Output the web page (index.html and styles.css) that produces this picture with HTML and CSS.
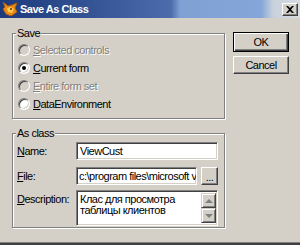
FILE: index.html
```html
<!DOCTYPE html>
<html>
<head>
    <title>Save As Class</title>
    <link rel="stylesheet" href="styles.css">
</head>
<body>
    <div class="window">
        <div class="titlebar">
            <svg class="app-icon" width="16" height="16" viewBox="0 0 16 16">
                <polygon points="1,1 6,5 10,4 15,2 13,7 15,11 9,15 4,13 1,8 3,6" fill="#e88a18" stroke="#b05a08" stroke-width="0.8"/>
                <polygon points="5,7 9,6 12,8 10,12 6,11" fill="#ffc850"/>
                <circle cx="9" cy="8" r="0.9" fill="#402000"/>
            </svg>
            <span class="title">Save As Class</span>
            <span class="close-btn">
                <svg width="8" height="7" viewBox="0 0 8 7">
                    <path d="M0,0 L2,0 L4,2 L6,0 L8,0 L5,3.5 L8,7 L6,7 L4,5 L2,7 L0,7 L3,3.5 Z" fill="#000"/>
                </svg>
            </span>
        </div>
        <div class="content">
            <div class="groups">
                <div class="group group-save">
                    <span class="legend">Save</span>
                    <div class="radio-row disabled"><span class="radio"></span><span><u>S</u>elected controls</span></div>
                    <div class="radio-row"><span class="radio checked"></span><span><u>C</u>urrent form</span></div>
                    <div class="radio-row disabled"><span class="radio"></span><span><u>E</u>ntire form set</span></div>
                    <div class="radio-row"><span class="radio"></span><span><u>D</u>ataEnvironment</span></div>
                </div>
                <div class="group group-class">
                    <span class="legend">As class</span>
                    <div class="field-row">
                        <span class="field-label"><u>N</u>ame:</span>
                        <div class="textbox name-box">ViewCust</div>
                    </div>
                    <div class="field-row file-row">
                        <span class="field-label"><u>F</u>ile:</span>
                        <div class="textbox file-box">c:\program files\microsoft v</div>
                        <div class="btn browse">...</div>
                    </div>
                    <div class="field-row desc-row">
                        <span class="field-label"><u>D</u>escription:</span>
                        <div class="textbox memo">
                            <div class="memo-text">Клас для просмотра<br>таблицы клиентов</div>
                            <div class="scroll">
                                <span class="scroll-btn"><span class="arrow-up"></span></span>
                                <span class="scroll-btn"><span class="arrow-down"></span></span>
                            </div>
                        </div>
                    </div>
                </div>
            </div>
            <div class="buttons">
                <div class="btn default">OK</div>
                <div class="btn cancel">Cancel</div>
            </div>
        </div>
    </div>
</body>
</html>
```
FILE: styles.css
```css
body {
    margin: 0;
    background-color: #d4d0c8;
    font-family: "Liberation Sans", Arial, sans-serif;
    font-size: 11px;
    letter-spacing: -0.5px;
    color: #000;
}
.window {
    width: 300px;
    height: 245px;
    box-sizing: border-box;
    border-bottom: 2px solid #404040;
    box-shadow: inset 0 -1px 0 #808080;
    overflow: hidden;
}
.titlebar {
    height: 18px;
    display: flex;
    align-items: center;
    background: linear-gradient(to right, #1c3a7c 0%, #3c5c9e 40%, #4c6cac 57%, #7ea0d2 60%, #84a6d8 87%, #c8d0dc 91%, #d8dce2 100%);
}
.app-icon {
    margin-left: 2px;
    flex: none;
}
.title {
    margin-left: 2px;
    color: #fff;
    font-weight: bold;
    font-size: 11px;
    letter-spacing: -0.5px;
    flex: 1;
}
.close-btn {
    width: 16px;
    height: 13px;
    margin-right: 2px;
    box-sizing: border-box;
    display: flex;
    align-items: center;
    justify-content: center;
    background-color: #d4d0c8;
    border: 1px solid;
    border-color: #fff #404040 #404040 #fff;
    box-shadow: inset -1px -1px 0 #808080;
}
.content {
    display: flex;
    padding-left: 12px;
}
.groups {
    width: 213px;
    padding-top: 15px;
}
.group {
    position: relative;
    box-sizing: border-box;
    width: 213px;
    border: 1px solid #808080;
    box-shadow: inset 1px 1px 0 #fff, 1px 1px 0 #fff;
}
.legend {
    position: absolute;
    top: -7px;
    left: 3px;
    padding: 0 1px;
    line-height: 13px;
    background-color: #d4d0c8;
}
.group-save {
    padding: 7px 0 5px 5px;
}
.radio-row {
    height: 18px;
    display: flex;
    align-items: center;
    gap: 3px;
}
.radio-row.disabled {
    color: #808080;
    text-shadow: 1px 1px 0 #fff;
}
.radio {
    width: 12px;
    height: 12px;
    box-sizing: border-box;
    border-radius: 50%;
    border: 1px solid;
    border-color: #808080 #fff #fff #808080;
    box-shadow: inset 1px 1px 0 #404040, inset -1px -1px 0 #d4d0c8;
    background-color: #fff;
    display: flex;
    align-items: center;
    justify-content: center;
}
.radio-row.disabled .radio {
    background-color: #d4d0c8;
}
.radio.checked::after {
    content: "";
    width: 4px;
    height: 4px;
    border-radius: 50%;
    background-color: #000;
}
.group-class {
    margin-top: 14px;
    padding: 8px 6px 1px 4px;
}
.field-row {
    display: flex;
    align-items: center;
    height: 18px;
}
.file-row {
    margin-top: 7px;
}
.desc-row {
    margin-top: 5px;
    height: 36px;
    align-items: flex-start;
}
.desc-row .field-label {
    padding-top: 3px;
}
.field-label {
    width: 59px;
    flex: none;
}
.textbox {
    height: 18px;
    box-sizing: border-box;
    border: 1px solid;
    border-color: #808080 #fff #fff #808080;
    box-shadow: inset 1px 1px 0 #404040, inset -1px -1px 0 #d4d0c8;
    background-color: #fff;
    padding: 2px 3px 0 3px;
    white-space: nowrap;
    overflow: hidden;
}
.name-box {
    width: 142px;
}
.file-box {
    width: 122px;
    padding-left: 2px;
}
.memo {
    width: 142px;
    height: 36px;
    display: flex;
    padding: 2px 1px 2px 3px;
}
.memo-text {
    flex: 1;
    line-height: 11px;
    padding-top: 1px;
}
.scroll {
    width: 15px;
    display: flex;
    flex-direction: column;
}
.scroll-btn {
    flex: 1;
    box-sizing: border-box;
    border: 1px solid;
    border-color: #d4d0c8 #404040 #404040 #d4d0c8;
    box-shadow: inset 1px 1px 0 #fff, inset -1px -1px 0 #808080;
    background-color: #d4d0c8;
    display: flex;
    align-items: center;
    justify-content: center;
}
.arrow-up {
    border-left: 4px solid transparent;
    border-right: 4px solid transparent;
    border-bottom: 4px solid #808080;
}
.arrow-down {
    border-left: 4px solid transparent;
    border-right: 4px solid transparent;
    border-top: 4px solid #808080;
}
.btn {
    box-sizing: border-box;
    background-color: #d4d0c8;
    border: 1px solid;
    border-color: #fff #404040 #404040 #fff;
    box-shadow: inset -1px -1px 0 #808080;
    display: flex;
    align-items: center;
    justify-content: center;
}
.browse {
    width: 17px;
    height: 18px;
    margin-left: 4px;
    align-items: flex-end;
    padding-bottom: 3px;
    line-height: 8px;
}
.buttons {
    margin-left: 8px;
    padding-top: 14px;
    display: flex;
    flex-direction: column;
    gap: 4px;
}
.buttons .btn {
    width: 56px;
    height: 18px;
}
.buttons .default {
    height: 20px;
    border: 1px solid #000;
    box-shadow: inset 1px 1px 0 #fff, inset -1px -1px 0 #404040, inset -2px -2px 0 #808080;
}
```
